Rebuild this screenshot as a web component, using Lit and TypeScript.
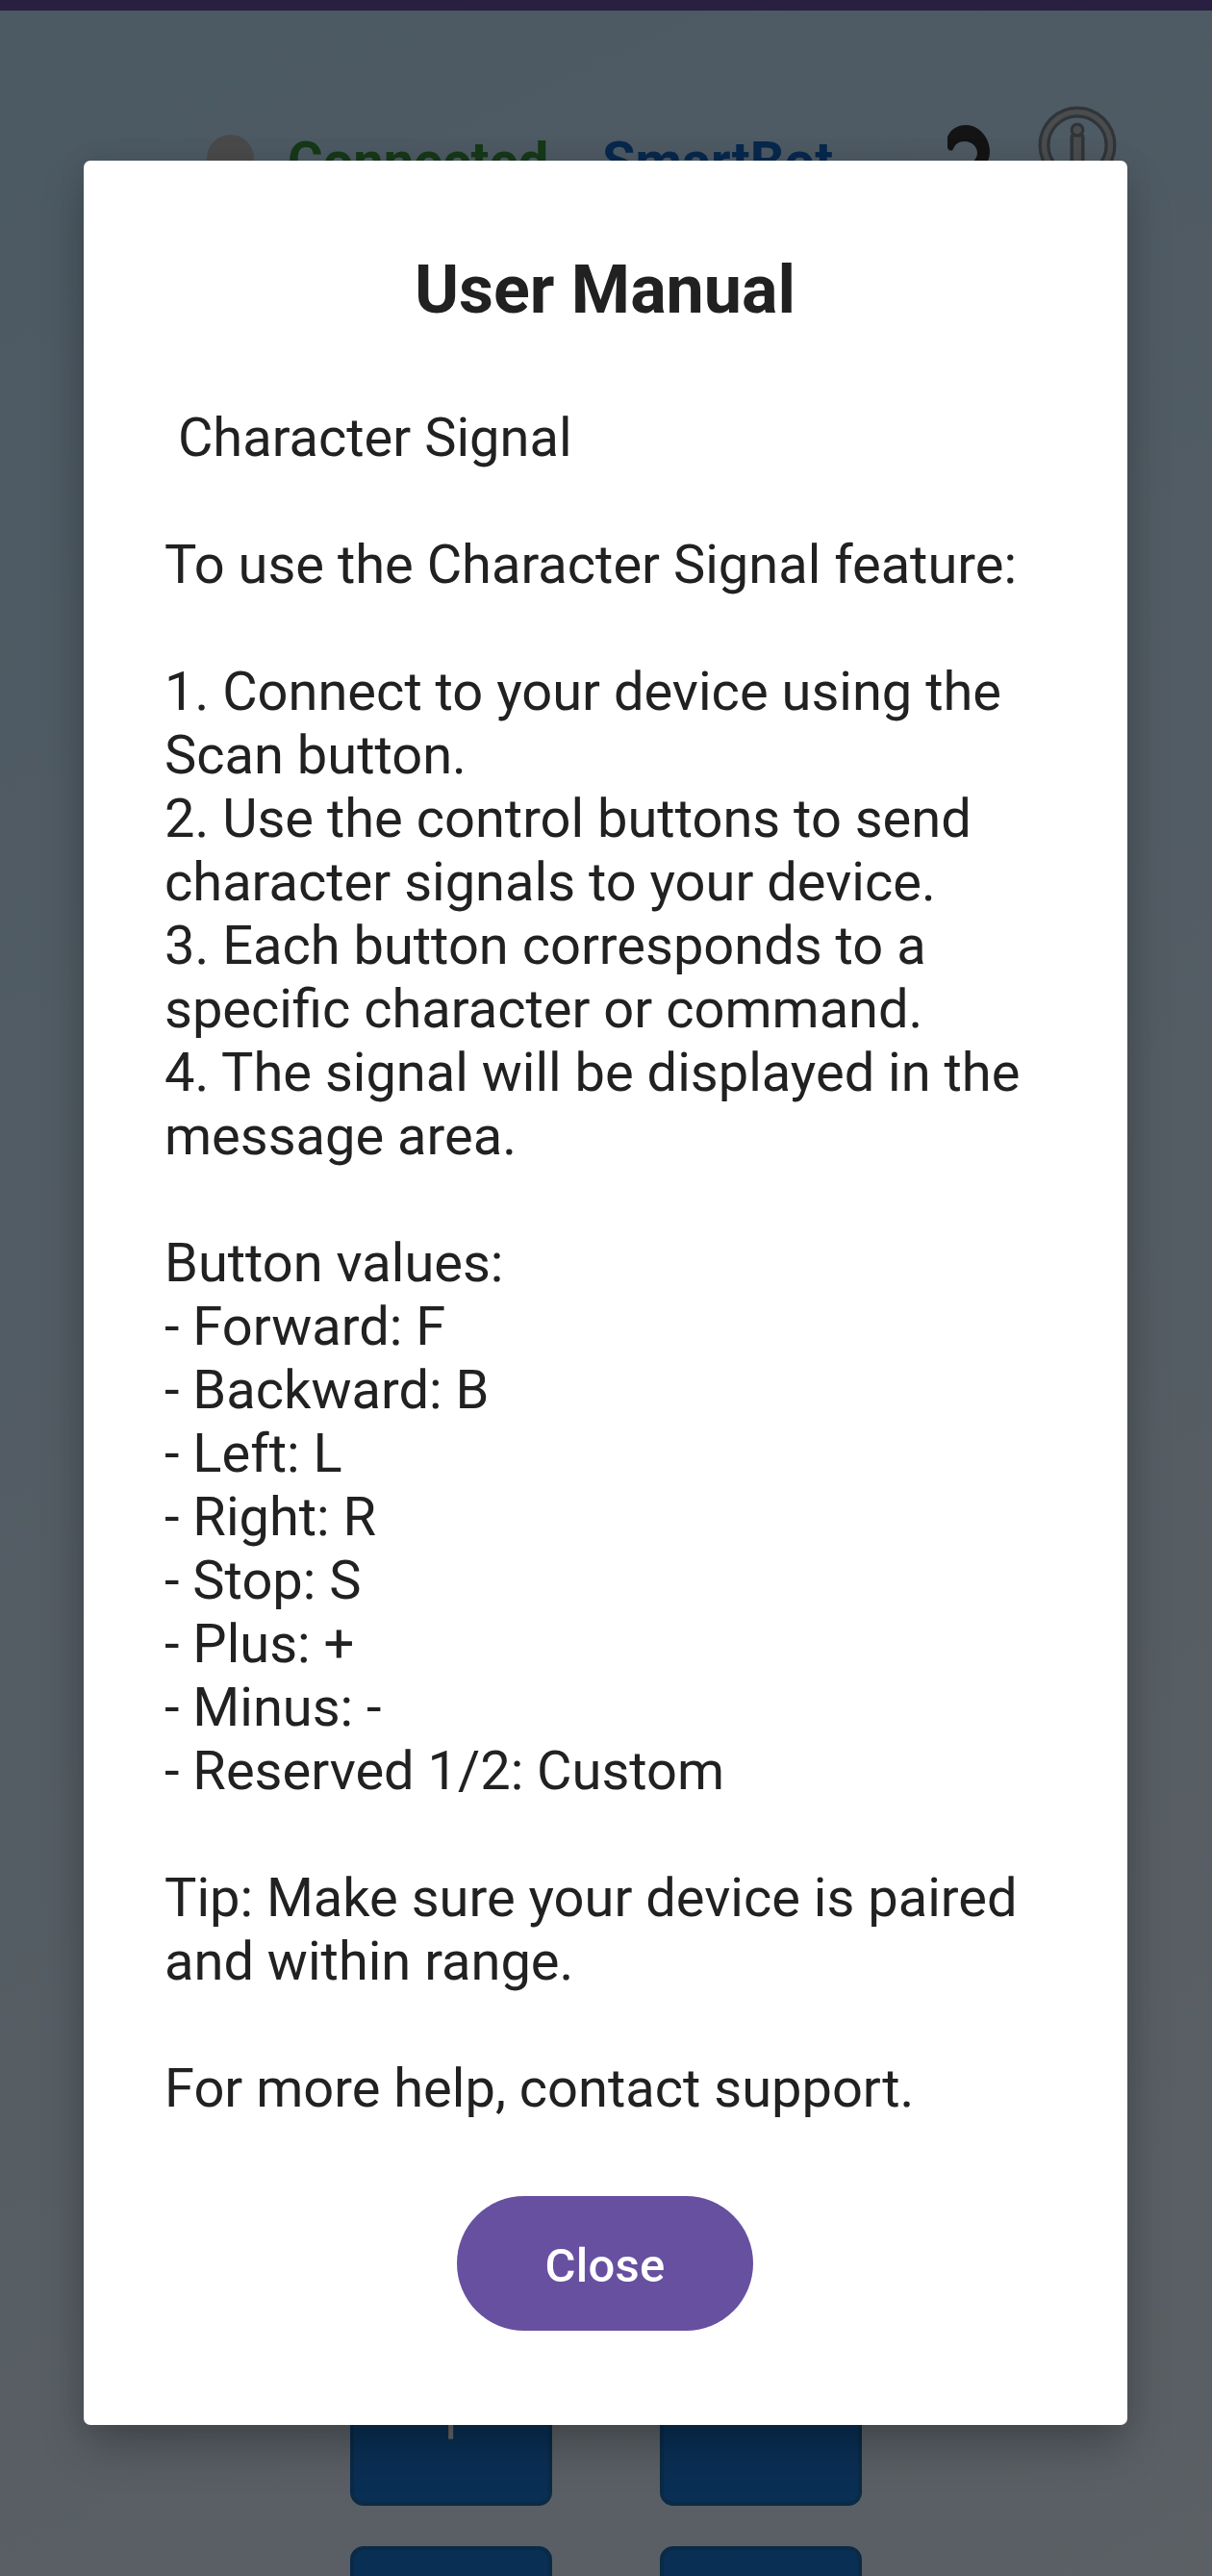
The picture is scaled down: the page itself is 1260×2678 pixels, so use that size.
import { LitElement, html, css } from "lit";
import { customElement } from "lit/decorators.js";

const MANUAL = ` Character Signal

To use the Character Signal feature:

1. Connect to your device using the Scan button.
2. Use the control buttons to send character signals to your device.
3. Each button corresponds to a specific character or command.
4. The signal will be displayed in the message area.

Button values:
- Forward: F
- Backward: B
- Left: L
- Right: R
- Stop: S
- Plus: +
- Minus: -
- Reserved 1/2: Custom

Tip: Make sure your device is paired and within range.

For more help, contact support.`;

@customElement("control-screen")
export class ControlScreen extends LitElement {
  static styles = css`
    :host {
      display: flex;
      flex-direction: column;
      height: 100%;
      box-sizing: border-box;
      border-top: 11px solid #6750a4;
      background: linear-gradient(154.8deg, #bde0f8, #e4effc);
      font-family: Roboto, sans-serif;
    }
    .header {
      display: flex;
      align-items: flex-start;
      padding: 99px 99px 0 215px;
    }
    .dot {
      width: 49px;
      height: 49px;
      margin-top: 30px;
      border-radius: 50%;
      background: #bababa;
    }
    .status,
    .device {
      margin-top: 25px;
      font-size: 56px;
      line-height: 66px;
      font-weight: 700;
    }
    .status {
      margin-left: 35px;
      width: 327px;
      color: #388e3c;
    }
    .device {
      flex: 1;
      color: #1565c0;
    }
    .help {
      width: 46px;
      height: 80px;
      margin: 20px 49px 0 0;
    }
    .info {
      width: 82px;
      height: 82px;
    }
    .pad {
      display: grid;
      grid-template-columns: 210px 210px;
      column-gap: 112px;
      row-gap: 42px;
      justify-content: center;
      margin-top: auto;
      height: 283px;
      overflow: hidden;
    }
    .key {
      box-sizing: border-box;
      height: 210px;
      border: 4px solid #1a69b0;
      border-radius: 14px;
      background: #1976d2;
      color: #fff;
      font-size: 84px;
      font-weight: 300;
      line-height: 230px;
      text-align: center;
    }
  `;

  render() {
    return html`
      <div class="header">
        <div class="dot"></div>
        <div class="status">Connected</div>
        <div class="device">SmartBot</div>
        <svg class="help" viewBox="0 0 46 80">
          <path
            d="M1 12C5 3 13 0 20 0C34 0 45 13 45 28C45 42 33 47 29 53V58H16C16 46 32 39 32 29C32 22 26 17 19 17C12 17 9 20 7 25C5 28 1 26 1 23Z"
            fill="#343434"
          />
          <circle cx="22" cy="70" r="8" fill="#343434" />
        </svg>
        <svg class="info" viewBox="0 0 82 82" fill="none">
          <circle cx="41" cy="41" r="34.5" stroke="#78858e" stroke-width="12" />
          <circle cx="41" cy="41" r="34.5" stroke="#b9bdc0" stroke-width="5.5" />
          <circle cx="41" cy="25" r="7.5" fill="#78858e" />
          <rect x="33.5" y="29" width="15" height="36" rx="3" fill="#78858e" />
          <circle cx="41" cy="25" r="4.3" fill="#b9bdc0" />
          <rect x="37" y="32.5" width="8" height="29" fill="#b9bdc0" />
        </svg>
      </div>
      <div class="pad">
        <div class="key">+</div>
        <div class="key">-</div>
        <div class="key"></div>
        <div class="key"></div>
      </div>
    `;
  }
}

@customElement("manual-dialog")
export class ManualDialog extends LitElement {
  static styles = css`
    :host {
      display: flex;
      flex-direction: column;
      align-items: center;
      box-sizing: border-box;
      width: 1085px;
      height: 2354px;
      padding: 93px 85px 0 84px;
      border-radius: 7px;
      background: #fff;
      color: #212121;
      font-family: Roboto, sans-serif;
      box-shadow: 0 24px 48px -4px rgba(0, 0, 0, 0.26), 0 0 30px rgba(0, 0, 0, 0.08);
    }
    .title {
      margin: 0;
      font-size: 70px;
      line-height: 82px;
      font-weight: 700;
    }
    .body {
      align-self: stretch;
      margin-top: 80px;
      font-size: 56px;
      line-height: 66px;
      white-space: pre-wrap;
    }
    .close {
      width: 308px;
      height: 140px;
      margin-top: 79px;
      padding: 4px 0 0;
      border: 0;
      border-radius: 70px;
      background: #6750a0;
      color: #fff;
      font: 500 49px Roboto, sans-serif;
      letter-spacing: 0.3px;
    }
  `;

  render() {
    return html`
      <h1 class="title">User Manual</h1>
      <div class="body">${MANUAL}</div>
      <button class="close">Close</button>
    `;
  }
}

@customElement("app-root")
export class AppRoot extends LitElement {
  static styles = css`
    :host {
      display: block;
      position: relative;
      width: 1260px;
      height: 2678px;
      overflow: hidden;
    }
    .scrim {
      position: absolute;
      inset: 0;
      box-sizing: border-box;
      padding: 167px 0 0 87px;
      background: rgba(0, 0, 0, 0.6);
    }
  `;

  render() {
    return html`
      <control-screen></control-screen>
      <div class="scrim"><manual-dialog></manual-dialog></div>
    `;
  }
}
